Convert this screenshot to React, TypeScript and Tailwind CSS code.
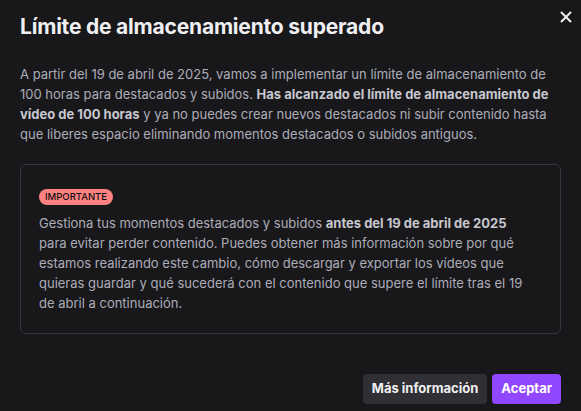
export default function App() {
  return (
    <div
      className="relative w-[581px] h-[411px] bg-[#18181b] text-[#adadb8] overflow-hidden"
      style={{ fontFamily: "Inter, 'Noto Sans', sans-serif" }}
    >
      {/* Close */}
      <button className="absolute top-[7px] right-[5px] w-[20px] h-[20px] flex items-center justify-center text-[#efeff1]">
        <svg width="12" height="12" viewBox="0 0 12 12" fill="none" stroke="currentColor" strokeWidth="2">
          <path d="M1 1l10 10M11 1L1 11" />
        </svg>
      </button>

      <div className="flex flex-col px-5 pt-[10px]">
        <h1 className="text-[21px] leading-[34px] font-bold text-[#efeff1] tracking-[-0.2px]">
          Límite de almacenamiento superado
        </h1>

        <p className="mt-[20px] text-[13px] leading-[20px] pr-[10px]">
          A partir del 19 de abril de 2025, vamos a implementar un límite de almacenamiento de 100&nbsp;horas para
          destacados y subidos.{" "}
          <strong className="font-bold text-[#c7c7cf]">
            Has alcanzado el límite de almacenamiento de vídeo de 100&nbsp;horas
          </strong>{" "}
          y ya no puedes crear nuevos destacados ni subir contenido hasta que liberes espacio eliminando momentos
          destacados o subidos antiguos.
        </p>

        {/* Important box */}
        <div className="mt-[20px] border border-[#35353b] rounded-[6px] px-[18px] pt-[17px] pb-[20px]">
          <span className="inline-block bg-[#ff8280] text-[#0e0e10] text-[9.5px] leading-[16px] font-medium px-[6px] rounded-full">
            IMPORTANTE
          </span>
          <p className="mt-[7px] text-[13px] leading-[20px] pr-[14px]">
            Gestiona tus momentos destacados y subidos{" "}
            <strong className="font-bold text-[#c7c7cf]">antes del 19 de abril de 2025</strong> para evitar
            perder contenido. Puedes obtener más información sobre por qué estamos realizando este cambio, cómo
            descargar y exportar los vídeos que quieras guardar y qué sucederá con el contenido que supere el
            límite tras el 19 de abril a continuación.
          </p>
        </div>

        {/* Footer */}
        <div className="mt-[40px] flex justify-end gap-[5px]">
          <button className="h-[30px] px-[9px] rounded-[4px] bg-[#2f2f35] text-[#efeff1] text-[13px] font-bold">
            Más información
          </button>
          <button className="h-[30px] px-[9px] rounded-[4px] bg-[#9147ff] text-white text-[13px] font-bold">
            Aceptar
          </button>
        </div>
      </div>
    </div>
  );
}
